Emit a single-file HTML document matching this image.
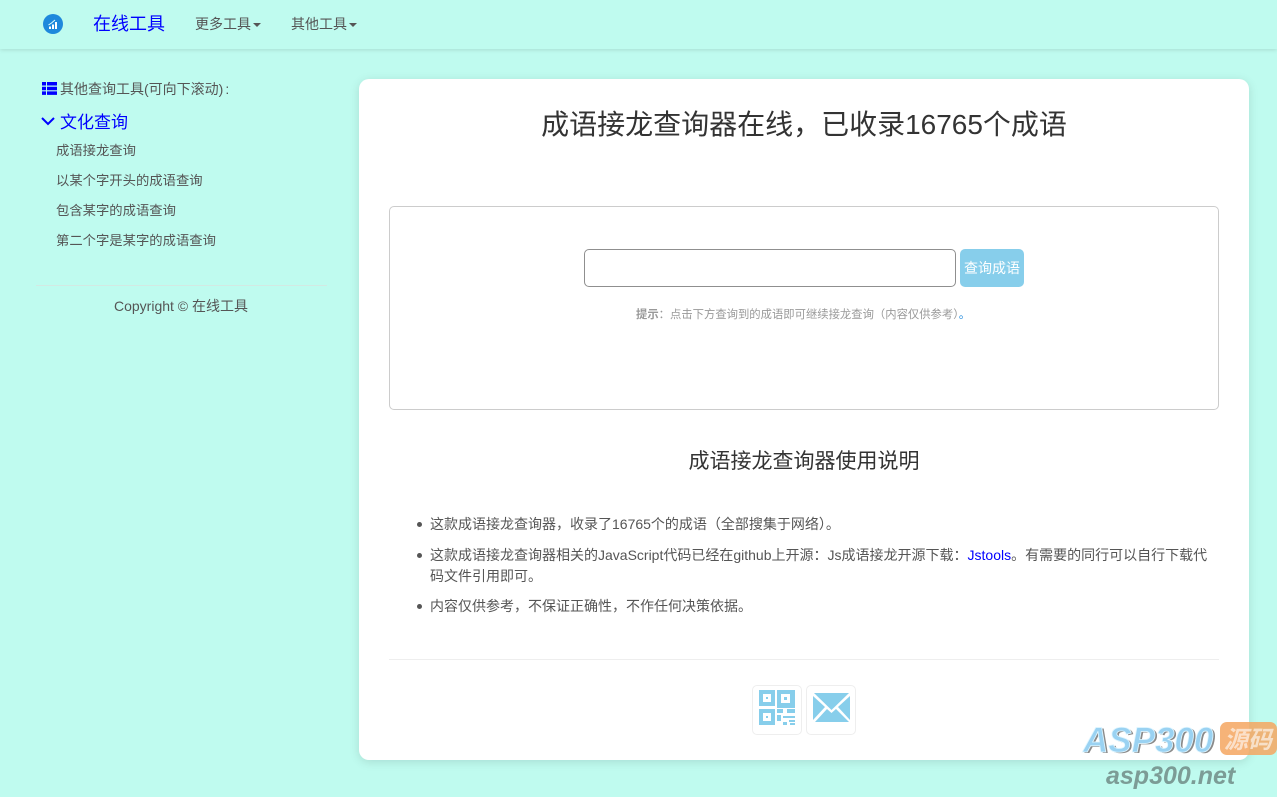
<!DOCTYPE html>
<html lang="zh"><head><meta charset="utf-8"><title>成语接龙查询器</title>
<style>
html,body{margin:0;padding:0}
body{width:1277px;height:797px;position:relative;overflow:hidden;background:#bffbef;font-family:"Liberation Sans","Noto Sans CJK SC",sans-serif;font-size:14px;color:#555}
.t{position:absolute;white-space:nowrap;line-height:20px}
.nav{position:absolute;left:0;top:0;width:1277px;height:49px;background:#bffbef;box-shadow:0 1px 4px rgba(0,0,0,.12)}
.caret{display:inline-block;width:0;height:0;border-left:4px solid transparent;border-right:4px solid transparent;border-top:4px solid #555;vertical-align:middle;margin-left:2px}
.card{position:absolute;left:359px;top:79px;width:890px;height:681px;background:#fff;border-radius:10px;box-shadow:0 2px 10px rgba(0,0,0,.12)}
.box{position:absolute;left:389px;top:206px;width:828px;height:202px;border:1px solid #ccc;border-radius:5px}
.input{position:absolute;left:584px;top:249px;width:370px;height:36px;border:1px solid #8f8f8f;border-radius:5px;background:#fff}
.btn{position:absolute;left:960px;top:249px;width:64px;height:38px;background:#87ceeb;border-radius:5px;color:#fff;font-size:14px;line-height:38px;text-align:center}
.ico{position:absolute;top:685px;width:48px;height:48px;border:1px solid #eee;border-radius:5px;background:#fff}
hr{position:absolute;margin:0;border:0;height:1px}
.dot{position:absolute;left:417px;width:5px;height:5px;border-radius:50%;background:#555}
.side{font-size:13.33px}
</style></head><body>
<div class="nav"></div>
<svg style="position:absolute;left:43px;top:14px" width="20" height="20" viewBox="0 0 20 20"><circle cx="10" cy="10" r="10" fill="#1e88dc"/><path d="M6 15v-2.500h2V15zM9 15v-4.500h2V15zM12 15V8h2v7z" fill="#fff"/><path d="M5.500 11l3-2 3.500-3" stroke="#dff" fill="none"/></svg>
<div class="t" style="left:93px;top:14px;font-size:18px;color:#00f">在线工具</div>
<div class="t" style="left:195px;top:14px;color:#555">更多工具<span class="caret"></span></div>
<div class="t" style="left:291px;top:14px;color:#555">其他工具<span class="caret"></span></div>

<svg style="position:absolute;left:42px;top:82px" width="15" height="13" viewBox="0 0 15 13" fill="#00f"><path d="M0 0h4v3.500H0zM5 0h10v3.500H5zM0 4.700h4v3.500H0zM5 4.700h10v3.500H5zM0 9.400h4v3.500H0zM5 9.400h10v3.500H5z"/></svg>
<div class="t" style="left:60px;top:79px">其他查询工具(可向下滚动)<span style="margin-left:2px">:</span></div>
<svg style="position:absolute;left:41px;top:117px" width="14" height="9" viewBox="0 0 14 9"><path d="M1 1l6 6 6-6" fill="none" stroke="#00f" stroke-width="2"/></svg>
<div class="t" style="left:60px;top:113px;font-size:17px;color:#00f">文化查询</div>
<div class="t side" style="left:56px;top:141px">成语接龙查询</div>
<div class="t side" style="left:56px;top:171px">以某个字开头的成语查询</div>
<div class="t side" style="left:56px;top:201px">包含某字的成语查询</div>
<div class="t side" style="left:56px;top:231px">第二个字是某字的成语查询</div>
<hr style="left:36px;top:285px;width:291px;background:#d3e9e3">
<div class="t" style="left:114px;top:296px">Copyright © 在线工具</div>

<div class="card"></div>
<div class="t" style="left:359px;width:890px;top:108px;line-height:34px;text-align:center;font-size:28px;color:#333">成语接龙查询器在线，已收录16765个成语</div>
<div class="box"></div>
<div class="input"></div>
<div class="btn">查询成语</div>
<div class="t" style="left:636px;top:305px;font-size:11.33px;color:#999"><b>提示</b>：点击下方查询到的成语即可继续接龙查询（内容仅供参考）<span style="color:#1e88dc">。</span></div>
<div class="t" style="left:359px;width:890px;top:449px;line-height:26px;text-align:center;font-size:21px;color:#333">成语接龙查询器使用说明</div>

<div class="dot" style="top:522px"></div>
<div class="t" style="left:430px;top:514px;font-size:14px">这款成语接龙查询器，收录了16765个的成语（全部搜集于网络）。</div>
<div class="dot" style="top:553px"></div>
<div class="t" style="left:430px;top:545px;font-size:14px">这款成语接龙查询器相关的JavaScript代码已经在github上开源：Js成语接龙开源下载：<span style="color:#00f">Jstools</span>。有需要的同行可以自行下载代</div>
<div class="t" style="left:430px;top:566px;font-size:14px">码文件引用即可。</div>
<div class="dot" style="top:604px"></div>
<div class="t" style="left:430px;top:596px;font-size:14px">内容仅供参考，不保证正确性，不作任何决策依据。</div>
<hr style="left:389px;top:659px;width:830px;background:#eee">

<div class="ico" style="left:752px"><svg width="48" height="48" viewBox="0 0 48 48"><g fill="#87ceeb"><path fill-rule="evenodd" d="M6 4h16v16H6zM10 8v8h8V8z"/><path d="M13 11h2v2h-2z"/><path fill-rule="evenodd" d="M24 4h18v18H24zM28 8v9h9V8z"/><path d="M31 11h3v3h-3z"/><path fill-rule="evenodd" d="M6 23h16v16H6zM10 27v8h8v-8z"/><path d="M13 30h2v2h-2zM24 23h6v4h-6zM34 23h8v4h-8zM24 29h4v6h-4zM30 30h12v2H30zM36 34h6v2h-6zM30 36h4v3h-4zM37 37h5v2h-5z"/></g></svg></div>
<div class="ico" style="left:806px"><svg width="48" height="48" viewBox="0 0 48 48"><g fill="#87ceeb"><path d="M7 7h35L24.500 24z"/><path d="M6 10v24l12-13zM43 10v24L31 21z"/><path d="M8 36l12-13 4.500 4 4.500-4 13 13z"/></g></svg></div>

<svg style="position:absolute;left:1080px;top:718px" width="197" height="79" viewBox="0 0 197 79">
<rect x="140" y="4" width="57" height="33" rx="7" fill="#f4a660" opacity=".85"/>
<text x="168" y="30" text-anchor="middle" font-family="Noto Sans CJK SC,sans-serif" font-size="24" font-weight="700" font-style="italic" fill="#fff" opacity=".6">源码</text>
<text x="4" y="34" font-family="Liberation Sans,sans-serif" font-size="35" font-weight="700" font-style="italic" fill="#8a8a8a" transform="translate(1 1)">ASP300</text>
<text x="3" y="34" font-family="Liberation Sans,sans-serif" font-size="35" font-weight="700" font-style="italic" fill="#9ad2f2" stroke="#e0f6ff" stroke-width=".8">ASP300</text>
<text x="26" y="66" font-family="Liberation Sans,sans-serif" font-size="25" font-weight="700" font-style="italic" fill="#7c9c96">asp300.net</text>
</svg>
</body></html>
